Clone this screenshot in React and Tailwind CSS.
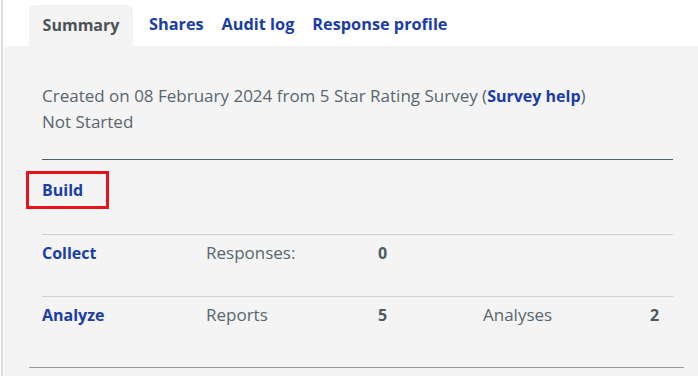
export default function App() {
  const blue = "text-[#1b3da8]";
  return (
    <div className="w-[698px] h-[376px] overflow-hidden bg-white flex font-['Open_Sans',sans-serif]">
      <div className="w-[3px] shrink-0 border-l-[2px] border-[#dcdcdc] ml-[1px]" />
      <div className="w-[694px] flex flex-col">
        <div className="h-[46px] flex items-end pl-[25px] bg-white">
          <div className="h-[41px] w-[104px] rounded-t-[6px] bg-[#f3f3f3] flex items-center justify-center pb-[2px] text-[16px] font-bold text-[#4b5258]">
            Summary
          </div>
          <div className={`h-[41px] flex items-center pb-[2px] gap-[18px] pl-[16px] text-[16.3px] font-bold ${blue}`}>
            <span>Shares</span>
            <span>Audit log</span>
            <span>Response profile</span>
          </div>
        </div>
        <div className="flex-1 bg-[#f4f4f4] pl-[38px] pt-[37px] text-[17px] text-[#59666f]">
          <div className="w-[631px]">
            <div className="leading-[25px] whitespace-nowrap">
              Created on 08 February 2024 from 5 Star Rating Survey (<span className={`font-bold text-[16px] ${blue}`}>Survey help</span>)
            </div>
            <div className="leading-[25px]">Not Started</div>
            <div className="mt-[25px] border-t border-[#4f5d64]" />
            <div className="h-[74px] pt-[11px]">
              <div className={`-ml-[16px] w-[83px] h-[38px] border-[3px] border-[#e8141c] flex items-center pl-[13px] text-[16px] font-bold ${blue}`}>
                Build
              </div>
            </div>
            {[
              ["Collect", "Responses:", "0", "", ""],
              ["Analyze", "Reports", "5", "Analyses", "2"],
            ].map((r, i) => (
              <div key={i} className="h-[62px] border-t border-[#cfcfcf] flex pt-[6px] leading-[24px]">
                <div className={`w-[164px] text-[16px] font-bold ${blue}`}>{r[0]}</div>
                <div className="w-[172px]">{r[1]}</div>
                <div className="w-[105px] text-[16px] font-bold text-[#4b5a62]">{r[2]}</div>
                <div className="w-[167px]">{r[3]}</div>
                <div className="text-[16px] font-bold text-[#4b5a62]">{r[4]}</div>
              </div>
            ))}
            <div className="-ml-[13px] w-[655px] mt-[9px] border-t border-[#9a9a9a]" />
          </div>
        </div>
      </div>
    </div>
  );
}
